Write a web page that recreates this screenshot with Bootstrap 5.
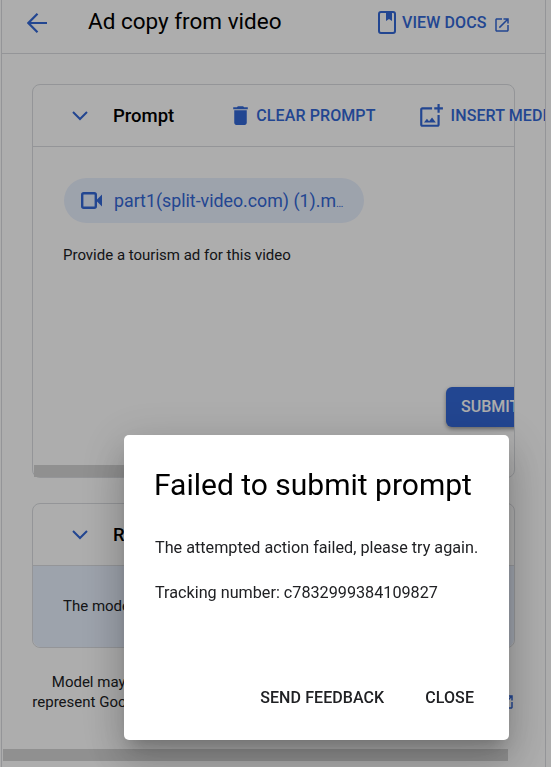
<!DOCTYPE html>
<html lang="en">
<head>
    <meta charset="UTF-8">
    <meta name="viewport" content="width=device-width, initial-scale=1">
    <title>Ad copy from video</title>
    <link rel="stylesheet" href="https://cdn.jsdelivr.net/npm/bootstrap@5.3.0/dist/css/bootstrap.min.css">
    <style>
        html, body { height: 100%; }
        body { font-family: Roboto, "Liberation Sans", sans-serif; color: #202124; background: #fff; overflow: hidden; }
        svg { flex-shrink: 0; }
        .app-frame { margin-left: 1px; width: 545px; height: 767px; border-left: 1px solid #dadce0; border-right: 1px solid #dadce0; overflow: hidden; }
        .top-bar { height: 54px; border-bottom: 1px solid #dadce0; padding: 0 0 8px 25px; white-space: nowrap; }
        .page-title { font-size: 22.5px; font-weight: 400; color: #000; margin: 0 0 0 41px; width: 290px; flex-shrink: 0; line-height: 26px; position: relative; top: -2px; }
        .link-btn { color: #3367d6; font-size: 16px; font-weight: 500; letter-spacing: .1px; text-transform: uppercase; padding: 0; border: 0; white-space: nowrap; line-height: 20px; flex-shrink: 0; }
        .link-btn:hover { color: #3367d6; }
        .docs-book { margin-right: 6px; }
        .docs-ext { margin: 4px 0 0 7px; }
        .clear-link { margin-left: 54px; }
        .clear-link svg { margin-right: 3px; }
        .insert-link { margin-left: 42px; }
        .insert-link svg { margin-right: 7px; }
        .page-body { padding: 30px 0 0 30px; }
        .panel { width: 483px; border: 1px solid #dadce0; border-radius: 8px; background: transparent; }
        .result-panel { margin-top: 25px; }
        .panel-head { height: 62px; border-bottom: 1px solid #dadce0; padding-left: 37px; white-space: nowrap; }
        .panel-title { font-size: 18.5px; font-weight: 500; color: #000; margin: 0 0 0 23px; line-height: 22px; flex-shrink: 0; }
        .prompt-body { height: 330px; overflow: hidden; position: relative; padding: 31px 0 0 31px; }
        .file-chip { width: 300px; height: 45px; background: #e8f0fe; border-radius: 23px; color: #3367d6; font-size: 17.8px; padding-left: 17px; white-space: nowrap; }
        .file-name { margin: 2px 0 0 12px; }
        .name-tail { font-size: 11px; }
        .prompt-text { font-size: 15px; line-height: 20px; margin: 22px 0 0 -1px; }
        .submit-btn { background: #3367d6; color: #fff; font-size: 16px; font-weight: 500; border: 0; border-radius: 6px; height: 40px; padding: 0 15px; margin: 122px 0 0 382px; box-shadow: 0 2px 4px rgba(0,0,0,.4); white-space: nowrap; display: block; }
        .fake-scroll { background: #d4d4d4; height: 12px; }
        .prompt-scroll { position: absolute; left: 1px; bottom: 0; width: 300px; }
        .result-body { height: 81px; background: #e8f0fe; border-radius: 0 0 8px 8px; padding: 30px 0 0 30px; font-size: 15px; line-height: 20px; }
        .model-note { width: 483px; margin-top: 24px; font-size: 15px; line-height: 20px; text-align: center; white-space: nowrap; }
        .page-scroll { width: 505px; margin: 37px 0 0 1px; }
        .dim-layer { position: fixed; inset: 0; background: rgba(0,0,0,.32); z-index: 10; }
        .fail-dialog { position: fixed; left: 124px; top: 435px; width: 385px; height: 305px; background: #fff; border-radius: 5px; z-index: 11; padding: 29px 31px 0; box-shadow: 0 11px 15px -7px rgba(0,0,0,.2), 0 24px 38px 3px rgba(0,0,0,.14), 0 9px 46px 8px rgba(0,0,0,.12); }
        .fail-title { font-size: 30px; font-weight: 400; line-height: 42px; color: #000; margin: 0 0 0 -1px; white-space: nowrap; }
        .fail-text { font-size: 16.2px; line-height: 24px; margin: 0; white-space: nowrap; }
        .fail-first { margin-top: 30px; }
        .fail-second { margin-top: 21px; }
        .fail-actions { position: absolute; right: 35px; bottom: 32px; gap: 41px; }
        .dialog-btn { color: #202124; font-size: 16px; font-weight: 500; letter-spacing: .08px; padding: 0; border: 0; line-height: 20px; }
    </style>
</head>
<body>

    <div class="app-frame">

        <!-- Top bar -->
        <div class="top-bar d-flex align-items-center">
            <svg width="20" height="20" viewBox="0 0 20 20" fill="none" stroke="#3367d6" stroke-width="2.2"><path d="M20 10H2M10.5.8 1.4 10l9.1 9.2"/></svg>
            <h1 class="page-title">Ad copy from video</h1>
            <a href="#" class="btn link-btn d-flex align-items-center">
                <svg class="docs-book" width="18" height="23" viewBox="0 0 18 23" fill="#3367d6"><path d="M3 0h12a3 3 0 0 1 3 3v17a3 3 0 0 1-3 3H3a3 3 0 0 1-3-3V3a3 3 0 0 1 3-3zm0 2a1 1 0 0 0-1 1v17a1 1 0 0 0 1 1h12a1 1 0 0 0 1-1V3a1 1 0 0 0-1-1h-1v8l-3-2-3 2V2z"/></svg>
                View docs
                <svg class="docs-ext" width="18" height="18" viewBox="0 0 24 24" fill="#3367d6"><path d="M19 19H5V5h7V3H5c-1.11 0-2 .9-2 2v14c0 1.1.89 2 2 2h14c1.1 0 2-.9 2-2v-7h-2v7zM14 3v2h3.59l-9.83 9.83 1.41 1.41L19 6.41V10h2V3h-7z"/></svg>
            </a>
        </div>

        <div class="page-body">

            <!-- Prompt panel -->
            <div class="card panel">
                <div class="panel-head d-flex align-items-center">
                    <svg width="20" height="12" viewBox="0 0 20 12" fill="none" stroke="#3367d6" stroke-width="2"><path d="M3 2l7 7 7-7"/></svg>
                    <h2 class="panel-title">Prompt</h2>
                    <a href="#" class="btn link-btn clear-link d-flex align-items-center">
                        <svg width="25" height="25" viewBox="0 0 24 24" fill="#3367d6"><path d="M6 19c0 1.1.9 2 2 2h8c1.1 0 2-.9 2-2V7H6v12zM19 4h-3.5l-1-1h-5l-1 1H5v2h14V4z"/></svg>
                        Clear prompt
                    </a>
                    <a href="#" class="btn link-btn insert-link d-flex align-items-center">
                        <svg width="26" height="26" viewBox="0 0 24 24" fill="#3367d6"><path d="M18 20H4V6h9V4H4c-1.1 0-2 .9-2 2v14c0 1.1.9 2 2 2h14c1.1 0 2-.9 2-2v-9h-2v9zm-7.79-3.17l-1.96-2.36L5.5 18h11l-3.54-4.71zM20 4V1h-2v3h-3c.01.01 0 2 0 2h3v2.99c.01.01 2 0 2 0V6h3V4h-3z"/></svg>
                        Insert media
                    </a>
                </div>
                <div class="prompt-body">
                    <div class="file-chip d-flex align-items-center">
                        <svg width="21" height="17" viewBox="0 0 21 17"><rect x="1.2" y="1.2" width="13.6" height="14.6" rx="1.5" fill="none" stroke="#3367d6" stroke-width="2.4"/><path d="M15 8.5l6-6v12z" fill="#3367d6"/></svg>
                        <span class="file-name">part1(split-video.com) (1).m<span class="name-tail">…</span></span>
                    </div>
                    <p class="prompt-text">Provide a tourism ad for this video</p>
                    <button type="button" class="btn submit-btn">SUBMIT PROMPT</button>
                    <div class="fake-scroll prompt-scroll"></div>
                </div>
            </div>

            <!-- Response panel -->
            <div class="card panel result-panel">
                <div class="panel-head d-flex align-items-center">
                    <svg width="20" height="12" viewBox="0 0 20 12" fill="none" stroke="#3367d6" stroke-width="2"><path d="M3 2l7 7 7-7"/></svg>
                    <h2 class="panel-title">Response</h2>
                </div>
                <div class="result-body">The model response will appear here</div>
            </div>

            <div class="model-note">
                <div>Model may display inaccurate or offensive information that doesn't</div>
                <div class="d-flex align-items-center justify-content-center">represent Google's views and it can make mistakes double-check this
                    <svg class="ms-1" width="18" height="18" viewBox="0 0 24 24" fill="#3367d6"><path d="M19 19H5V5h7V3H5c-1.11 0-2 .9-2 2v14c0 1.1.89 2 2 2h14c1.1 0 2-.9 2-2v-7h-2v7zM14 3v2h3.59l-9.83 9.83 1.41 1.41L19 6.41V10h2V3h-7z"/></svg>
                </div>
            </div>
        </div>

        <div class="fake-scroll page-scroll"></div>
    </div>

    <!-- Error dialog -->
    <div class="dim-layer"></div>
    <div class="fail-dialog">
        <h2 class="fail-title">Failed to submit prompt</h2>
        <p class="fail-text fail-first">The attempted action failed, please try again.</p>
        <p class="fail-text fail-second">Tracking number: c7832999384109827</p>
        <div class="fail-actions d-flex">
            <button type="button" class="btn dialog-btn">SEND FEEDBACK</button>
            <button type="button" class="btn dialog-btn">CLOSE</button>
        </div>
    </div>

    <script src="https://cdn.jsdelivr.net/npm/bootstrap@5.3.0/dist/js/bootstrap.bundle.min.js"></script>
</body>
</html>
